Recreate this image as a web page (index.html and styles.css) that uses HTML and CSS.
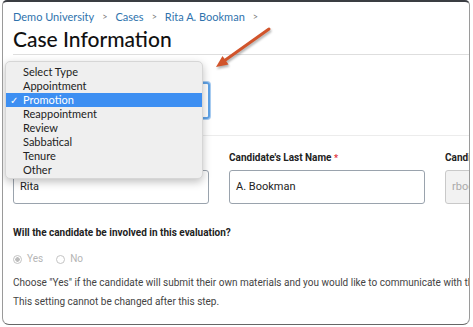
FILE: index.html
```html
<!DOCTYPE html>
<html lang="en">
<head>
    <meta charset="UTF-8">
    <meta name="viewport" content="width=device-width, initial-scale=1.0">
    <title>Case Information</title>
    <link rel="stylesheet" href="styles.css">
</head>
<body>
    <div class="frame">
        <!-- Page Header -->
        <header class="page-header">
            <nav class="crumbs">
                <a href="#">Demo University</a>
                <span class="sep">&gt;</span>
                <a href="#">Cases</a>
                <span class="sep">&gt;</span>
                <a href="#">Rita A. Bookman</a>
                <span class="sep">&gt;</span>
            </nav>
            <h1>Case Information</h1>
        </header>

        <!-- Case Type -->
        <section class="type-section">
            <label class="field-label">Case Type <span class="req">*</span></label>
            <div class="select-box is-focused">Promotion</div>
        </section>

        <!-- Candidate Details -->
        <section class="details">
            <div class="field-row">
                <div class="field">
                    <label class="field-label">Candidate's First Name <span class="req">*</span></label>
                    <div class="input">Rita</div>
                </div>
                <div class="field">
                    <label class="field-label">Candidate's Last Name <span class="req">*</span></label>
                    <div class="input">A. Bookman</div>
                </div>
                <div class="field">
                    <label class="field-label">Candidate's Email</label>
                    <div class="input is-disabled">rbookman@demo.edu</div>
                </div>
            </div>

            <p class="question">Will the candidate be involved in this evaluation?</p>
            <div class="radios">
                <span class="radio is-checked">Yes</span>
                <span class="radio">No</span>
            </div>
            <p class="help">Choose "Yes" if the candidate will submit their own materials and you would like to communicate with them through the system.</p>
            <p class="help">This setting cannot be changed after this step.</p>
        </section>

        <!-- Open select menu -->
        <ul class="dropdown">
            <li>Select Type</li>
            <li>Appointment</li>
            <li class="is-selected">Promotion</li>
            <li>Reappointment</li>
            <li>Review</li>
            <li>Sabbatical</li>
            <li>Tenure</li>
            <li>Other</li>
        </ul>

        <!-- Annotation arrow -->
        <svg class="arrow" width="66" height="50" viewBox="0 0 66 50">
            <line x1="58" y1="5" x2="13" y2="37" stroke="#d1542b" stroke-width="3" stroke-linecap="round"/>
            <polygon points="5,43 17.5,40.5 11.5,32" fill="#d1542b"/>
        </svg>
    </div>
</body>
</html>
```

FILE: styles.css
```css
/* General Styles */
* {
    margin: 0;
    padding: 0;
    box-sizing: border-box;
}

body {
    background: #fff;
    font-family: Roboto, "Liberation Sans", sans-serif;
    color: #333;
}

.frame {
    position: relative;
    width: 468px;
    height: 325px;
    margin-left: 2px;
    background: #fff;
    border: 1px solid #9a9a9a;
    border-top: 2px solid #3a3d42;
    border-bottom-color: #666;
    border-radius: 5px 5px 7px 7px;
    overflow: hidden;
}

/* Header */
.page-header {
    margin-left: 10px;
    padding-top: 8px;
    height: 53px;
    border-bottom: 1px solid #dedede;
}

.crumbs {
    display: flex;
    align-items: center;
    font-family: Lato, sans-serif;
    font-size: 11px;
    line-height: 14px;
}

.crumbs a {
    color: #2f73ad;
    text-decoration: none;
}

.crumbs .sep {
    color: #777;
    font-size: 9px;
    margin: 0 8px;
}

.page-header h1 {
    font-family: Lato, sans-serif;
    font-weight: 500;
    font-size: 21px;
    line-height: 26px;
    color: #111;
    margin-top: 2px;
}

/* Case Type */
.type-section {
    margin-left: 10px;
    padding-top: 11px;
    height: 81px;
    border-bottom: 1px solid #ececec;
}

.field-label {
    display: block;
    font-size: 10px;
    font-weight: 700;
    color: #222;
    line-height: 12px;
    margin-bottom: 4px;
}

.req {
    color: #e0303a;
    font-size: 9px;
    vertical-align: top;
}

.select-box {
    width: 197px;
    height: 37px;
    border: 2px solid #5fa2e6;
    border-radius: 3px;
    box-shadow: 0 0 0 1px #a9cdf2;
    font-size: 11px;
    padding: 10px;
}

/* Details */
.details {
    padding: 16px 0 0 10px;
}

.field-row {
    display: flex;
    gap: 20px;
}

.field {
    width: 196px;
    flex-shrink: 0;
}

.field .field-label {
    margin-bottom: 6px;
}

.input {
    height: 34px;
    border: 1px solid #9aa3ad;
    border-radius: 3px;
    font-size: 11px;
    color: #222;
    padding: 9px 6px;
    white-space: nowrap;
    overflow: hidden;
}

.input.is-disabled {
    background: #f2f2f2;
    border-color: #c9c9c9;
    color: #aaa;
}

.question {
    font-size: 10px;
    font-weight: 700;
    color: #222;
    margin-top: 23px;
    line-height: 12px;
}

.radios {
    display: flex;
    gap: 13px;
    margin-top: 14px;
    font-size: 10px;
    color: #b5b5b5;
    line-height: 12px;
}

.radio {
    display: flex;
    align-items: center;
    gap: 5px;
}

.radio::before {
    content: "";
    width: 9px;
    height: 9px;
    border: 1px solid #c4c4c4;
    border-radius: 50%;
    box-sizing: border-box;
}

.radio.is-checked::before {
    background: radial-gradient(circle, #bdbdbd 0 2px, #fff 2.5px);
}

.help {
    font-size: 10px;
    color: #444;
    line-height: 12px;
    white-space: nowrap;
    margin-top: 12px;
}

.help + .help {
    margin-top: 7px;
}

/* Dropdown Menu */
.dropdown {
    position: absolute;
    left: 2px;
    top: 59px;
    width: 198px;
    padding: 3px 0 1px;
    list-style: none;
    background: #efefef;
    border: 1px solid #d6d6d6;
    border-radius: 5px;
    box-shadow: 0 3px 8px rgba(0, 0, 0, 0.25);
    font-family: Lato, sans-serif;
    font-size: 11px;
    color: #222;
}

.dropdown li {
    position: relative;
    height: 14px;
    line-height: 14px;
    padding-left: 17px;
}

.dropdown li.is-selected {
    background: #3d8ff2;
    color: #fff;
}

.dropdown li.is-selected::before {
    content: "\2713";
    position: absolute;
    left: 4px;
    font-size: 10px;
}

/* Arrow */
.arrow {
    position: absolute;
    left: 208px;
    top: 22px;
    filter: drop-shadow(1px 2px 1px rgba(0, 0, 0, 0.3));
}
```
